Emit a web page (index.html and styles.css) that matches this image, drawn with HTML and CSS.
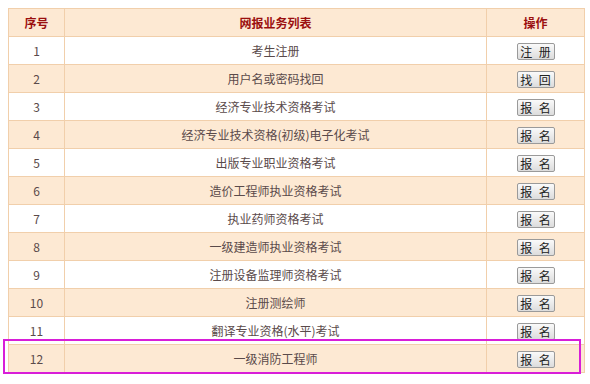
FILE: index.html
```html
<!DOCTYPE html>
<html>
<head>
<meta charset="utf-8">
<link rel="stylesheet" href="styles.css">
</head>
<body>
<div class="wrap">
<table class="list">
  <colgroup><col class="c1"><col class="c2"><col class="c3"></colgroup>
  <thead>
    <tr><th>序号</th><th>网报业务列表</th><th>操作</th></tr>
  </thead>
  <tbody>
    <tr class="odd"><td>1</td><td>考生注册</td><td><button class="btn">注 册</button></td></tr>
    <tr class="even"><td>2</td><td>用户名或密码找回</td><td><button class="btn">找 回</button></td></tr>
    <tr class="odd"><td>3</td><td>经济专业技术资格考试</td><td><button class="btn">报 名</button></td></tr>
    <tr class="even"><td>4</td><td>经济专业技术资格(初级)电子化考试</td><td><button class="btn">报 名</button></td></tr>
    <tr class="odd"><td>5</td><td>出版专业职业资格考试</td><td><button class="btn">报 名</button></td></tr>
    <tr class="even"><td>6</td><td>造价工程师执业资格考试</td><td><button class="btn">报 名</button></td></tr>
    <tr class="odd"><td>7</td><td>执业药师资格考试</td><td><button class="btn">报 名</button></td></tr>
    <tr class="even"><td>8</td><td>一级建造师执业资格考试</td><td><button class="btn">报 名</button></td></tr>
    <tr class="odd"><td>9</td><td>注册设备监理师资格考试</td><td><button class="btn">报 名</button></td></tr>
    <tr class="even"><td>10</td><td>注册测绘师</td><td><button class="btn">报 名</button></td></tr>
    <tr class="odd"><td>11</td><td>翻译专业资格(水平)考试</td><td><button class="btn">报 名</button></td></tr>
    <tr class="even"><td>12</td><td>一级消防工程师</td><td><button class="btn">报 名</button></td></tr>
  </tbody>
</table>
<div class="highlight"></div>
</div>
</body>
</html>
```

FILE: styles.css
```css
html, body { margin: 0; padding: 0; background: #fff; }
body {
  font-family: "Noto Sans CJK SC", "Liberation Sans", sans-serif;
  font-size: 12px;
  color: #555;
}
.wrap { position: relative; padding: 8px; }
.list {
  border-collapse: collapse;
  width: 576px;
  table-layout: fixed;
}
.c1 { width: 56px; }
.c2 { width: 422px; }
.c3 { width: 98px; }
.list th, .list td {
  border: 1px solid #f1cfab;
  height: 27px;
  padding: 0;
  text-align: center;
  vertical-align: middle;
}
.list th {
  background: #fde9d3;
  color: #9b0f0f;
  font-weight: bold;
}
.list td { color: #5a4a4a; }
.odd td { background: #fff; }
.even td { background: #fde9d3; }
.btn {
  font-family: "Noto Sans CJK SC", sans-serif;
  font-size: 12px;
  line-height: 13px;
  letter-spacing: 2px;
  text-indent: 2px;
  width: 38px;
  height: 17px;
  padding: 0;
  border: 1px solid #9a9a9a;
  border-radius: 2px;
  background: linear-gradient(#fafafa, #dcdcdc);
  color: #222;
  display: inline-block;
  vertical-align: middle;
  white-space: pre;
}
.highlight {
  position: absolute;
  left: 3px;
  top: 339px;
  width: 574px;
  height: 31px;
  border: 2px solid #d81ed8;
  pointer-events: none;
}
```
